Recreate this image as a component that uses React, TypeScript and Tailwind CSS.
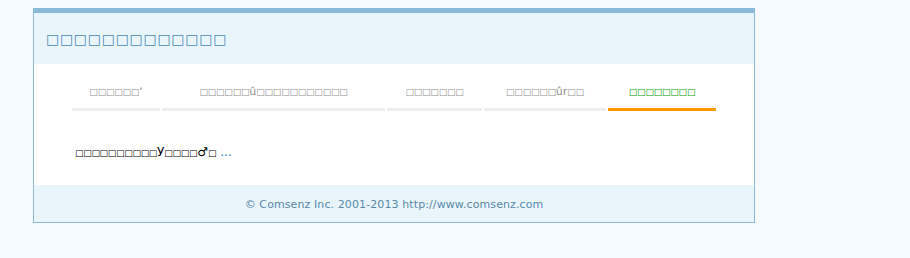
import React from "react";

const S = "\u25A1";
const rep = (n: number) => S.repeat(n);

function Boxes({ n }: { n: number }) {
  return <span className="text-[9px] tracking-[-0.2px]">{rep(n)}</span>;
}

const tabs: { label: React.ReactNode; w: string; active: boolean }[] = [
  { label: <><Boxes n={6} />{"\u02BC"}</>, w: "w-[88px]", active: false },
  { label: <><Boxes n={6} />{"\u00FB"}<Boxes n={11} /></>, w: "w-[223px]", active: false },
  { label: <Boxes n={7} />, w: "w-[95px]", active: false },
  { label: <><Boxes n={6} />{"\u00FBr"}<Boxes n={2} /></>, w: "w-[122px]", active: false },
  { label: <Boxes n={8} />, w: "w-[108px]", active: true },
];

export default function App() {
  return (
    <div className="min-h-[258px] w-full bg-[#f4faff] pt-[8px] pl-[33px]" style={{ fontFamily: '"DejaVu Sans", Verdana, sans-serif' }}>
      <div className="w-[722px] border-x border-b border-t-[5px] border-[#8bbad8] bg-white">
        <div className="flex h-[51px] items-center bg-[#e8f6fc] pl-[12px] text-[14px] leading-none tracking-[0.7px] text-[#4b8ab2]">
          {rep(13)}
        </div>
        <div className="pl-[38px] pt-[22px] pb-[26px]">
          <div className="flex gap-[2px]">
            {tabs.map((t, i) => (
              <div
                key={i}
                className={`${t.w} h-[25px] border-b-[3px] pb-[10px] text-center text-[11px] leading-[12px] ${t.active ? "border-[#ff9900] text-[#009900]" : "border-[#eeeeee] text-[#8e8e8e]"}`}
              >
                {t.label}
              </div>
            ))}
          </div>
          <div className="mt-[34px] h-[14px] overflow-visible pl-[3px] text-[12px] leading-[14px] text-black">
            <span className="text-[9px] tracking-[-0.3px]">{rep(10)}</span>У
            <span className="text-[9px] tracking-[-0.3px]">{rep(4)}</span>♂
            <span className="text-[9px]">{S}</span> <span className="text-[#1a6fc0]">...</span>
          </div>
        </div>
        <div className="flex h-[37px] items-center justify-center bg-[#e8f6fc] pt-[4px] text-[11px] tracking-[0.1px] text-[#5a88a8]">
          © Comsenz Inc. 2001-2013 http://www.comsenz.com
        </div>
      </div>
    </div>
  );
}
